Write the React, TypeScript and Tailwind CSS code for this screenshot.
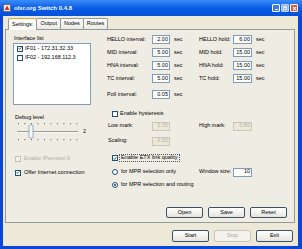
import React from "react";
import clsx from "clsx";

function Check({ checked, disabled }: { checked?: boolean; disabled?: boolean }) {
  return (
    <span
      className={clsx(
        "w-[6px] h-[6px] border flex items-center justify-center shrink-0",
        disabled ? "border-[#c4c2b4] bg-[#f2f1ea]" : "border-[#1c5180] bg-white"
      )}
    >
      {checked && (
        <svg viewBox="0 0 6 6" className="w-[5px] h-[5px]">
          <path d="M0.8 2.8 L2.3 4.4 L5.2 1.0" stroke="#2a3a2a" strokeWidth="1.2" fill="none" />
        </svg>
      )}
    </span>
  );
}

function Radio({ on }: { on?: boolean }) {
  return (
    <span className="w-[6px] h-[6px] rounded-full border border-[#1c5180] bg-white flex items-center justify-center shrink-0">
      {on && <span className="w-[2px] h-[2px] rounded-full bg-[#2a3a2a]" />}
    </span>
  );
}

function Field({ value, w, disabled }: { value: string; w: string; disabled?: boolean }) {
  return (
    <div
      className={clsx(
        "h-[9px] border flex items-center justify-end pr-[1px] shrink-0",
        w,
        disabled ? "border-[#c9c7ba] bg-[#ece9d8] text-[#b4b2a6]" : "border-[#7f9db9] bg-white"
      )}
    >
      {value}
    </div>
  );
}

function Btn({ label, disabled }: { label: string; disabled?: boolean }) {
  return (
    <div
      className={clsx(
        "w-[37px] h-full rounded-[2px] border flex items-center justify-center",
        disabled
          ? "border-[#c9c7ba] bg-[#f3f2ec] text-[#aca899]"
          : "border-[#3c5168] bg-linear-to-b from-[#ffffff] to-[#e6e4da]"
      )}
    >
      {label}
    </div>
  );
}

function TimeRow({ label, value, label2, value2 }: { label: string; value: string; label2?: string; value2?: string }) {
  return (
    <div className="flex items-center h-[13px]">
      <span className="w-[45px]">{label}</span>
      <Field value={value} w="w-[18px]" />
      <span className="ml-[4px] w-[25px]">sec</span>
      {label2 && (
        <>
          <span className="w-[34px]">{label2}</span>
          <Field value={value2 || ""} w="w-[19px]" />
          <span className="ml-[4px]">sec</span>
        </>
      )}
    </div>
  );
}

const tabs = ["Settings", "Output", "Nodes", "Routes"];

export default function App() {
  return (
    <div className="w-[302px] h-[249px] bg-[#0b47d6] flex flex-col overflow-hidden font-['Liberation_Sans',Arial,sans-serif] text-[5.5px] leading-none text-black">
      {/* title bar */}
      <div className="h-[16px] shrink-0 flex items-center px-[3px] bg-linear-to-b from-[#3b8cf7] via-[#0a5ce6] to-[#0650d8]">
        <svg viewBox="0 0 8 8" className="w-[8px] h-[8px]">
          <rect x="0.5" y="0.5" width="7" height="7" fill="#f4efe6" stroke="#7a3b2e" strokeWidth="0.6" />
          <path d="M1.5 6 L4 1.5 L6.5 6 Z" fill="#c8341f" />
        </svg>
        <span className="ml-[3px] text-white font-bold text-[6px]">olsr.org Switch 0.4.8</span>
        <div className="ml-auto flex gap-[1px] mr-[1px]">
          <div className="w-[8px] h-[8px] rounded-[1px] border border-white bg-[#3a7cf0] flex items-end justify-center pb-[1px]">
            <span className="w-[3px] h-[1px] bg-white" />
          </div>
          <div className="w-[8px] h-[8px] rounded-[1px] border border-[#c8d8f8] bg-[#8eb0ee] flex items-center justify-center">
            <span className="w-[4px] h-[4px] border border-[#dfe8fa] border-t-2" />
          </div>
          <div className="w-[8px] h-[8px] rounded-[1px] border border-white bg-[#e0532c] flex items-center justify-center">
            <svg viewBox="0 0 6 6" className="w-[5px] h-[5px]">
              <path d="M1 1 L5 5 M5 1 L1 5" stroke="white" strokeWidth="1.3" />
            </svg>
          </div>
        </div>
      </div>

      {/* client area */}
      <div className="flex-1 ml-[3px] mr-[4px] mb-[3px] bg-[#ece9d8] flex flex-col">
        <div className="h-[13px] pt-[2px] pl-[5px] flex items-end shrink-0">
          {tabs.map((t, i) => (
            <div
              key={t}
              className={clsx(
                "h-[11px] px-[3px] flex items-center border border-b-0 border-[#919b9c] rounded-t-[2px]",
                i === 0 ? "bg-[#fbfbf8] border-t-[#e8a33c] -mb-px z-10 h-[12px]" : "bg-linear-to-b from-[#ffffff] to-[#ebe9e0] -ml-px"
              )}
            >
              {i === 0 ? "Settings:" : t}
            </div>
          ))}
        </div>

        <div className="ml-[2px] mr-[3px] h-[194px] shrink-0 border border-[#919b9c] bg-[#efede3] flex">
          {/* left column */}
          <div className="w-[78px] ml-[7px] pt-[5px] flex flex-col shrink-0">
            <div className="h-[7px] pl-[1px] flex items-center">Interface list</div>
            <div className="mt-[1px] h-[62px] border border-[#7f9db9] bg-white pt-[0px]">
              <div className="h-[9px] flex items-center pl-[3px] gap-[2px]">
                <Check checked />
                <span>IF01 - 172.31.32.33</span>
              </div>
              <div className="h-[9px] flex items-center pl-[3px] gap-[2px]">
                <Check />
                <span>IF02 - 192.168.112.3</span>
              </div>
            </div>
            <div className="mt-[9px] h-[7px] pl-[2px] flex items-center">Debug level</div>
            <div className="h-[21px] flex items-center">
              <svg viewBox="0 0 64 21" className="w-[64px] h-[21px] ml-[2px]">
                {Array.from({ length: 10 }).map((_, i) => (
                  <g key={i}>
                    <rect x={3 + i * 6.5} y={2} width={0.8} height={1.2} fill="#4a4a4a" />
                    <rect x={3 + i * 6.5} y={18} width={0.8} height={1.2} fill="#4a4a4a" />
                  </g>
                ))}
                <rect x={2} y={10} width={61} height={1.2} fill="#9d9b8e" />
                <rect x={2} y={11.2} width={61} height={0.8} fill="#ffffff" />
                <rect x={14} y={4} width={4} height={13} rx={0.8} fill="#f6f6f2" stroke="#6f8fb8" strokeWidth={0.7} />
              </svg>
              <span className="ml-[4px]">2</span>
            </div>
            <div className="mt-[13px] h-[7px] pl-[2px] flex items-center gap-[3px] text-[#b1afa3]">
              <Check disabled />
              <span>Enable IPversion 6</span>
            </div>
            <div className="mt-[7px] h-[7px] pl-[2px] flex items-center gap-[3px]">
              <Check checked />
              <span>Offer Internet connection</span>
            </div>
          </div>

          {/* right column */}
          <div className="ml-[16px] flex-1 pt-[3px] flex flex-col">
            <TimeRow label="HELLO interval:" value="2.00" label2="HELLO hold:" value2="6.00" />
            <TimeRow label="MID interval:" value="5.00" label2="MID hold:" value2="15.00" />
            <TimeRow label="HNA interval:" value="5.00" label2="HNA hold:" value2="15.00" />
            <TimeRow label="TC interval:" value="5.00" label2="TC hold:" value2="15.00" />
            <div className="mt-[3px]">
              <TimeRow label="Poll interval:" value="0.05" />
            </div>

            <div className="mt-[7px] h-[12px] pl-[5px] flex items-center gap-[2px]">
              <Check />
              <span>Enable hysteresis</span>
            </div>
            <div className="h-[12px] flex items-center">
              <span className="w-[45px] pl-[1px]">Low mark:</span>
              <Field value="0.30" w="w-[18px]" disabled />
              <span className="w-[29px]" />
              <span className="w-[34px]">High mark:</span>
              <Field value="0.80" w="w-[19px]" disabled />
            </div>
            <div className="mt-[3px] h-[12px] flex items-center">
              <span className="w-[45px] pl-[1px]">Scaling:</span>
              <Field value="0.50" w="w-[18px]" disabled />
            </div>

            <div className="mt-[5px] h-[12px] pl-[5px] flex items-center gap-[2px]">
              <Check checked />
              <span className="outline outline-dotted outline-[0.5px] outline-[#555] px-[1px]">Enable ETX link quality</span>
            </div>
            <div className="mt-[2px] h-[12px] flex items-center">
              <div className="w-[92px] pl-[5px] flex items-center gap-[3px]">
                <Radio />
                <span>for MPR selection only</span>
              </div>
              <span className="w-[34px]">Window size:</span>
              <Field value="10" w="w-[19px]" />
            </div>
            <div className="mt-[1px] h-[12px] pl-[5px] flex items-center gap-[3px]">
              <Radio on />
              <span>for MPR selection and routing</span>
            </div>

            <div className="mt-[16px] h-[11px] flex justify-end gap-[5px] pr-[7px]">
              <Btn label="Open" />
              <Btn label="Save" />
              <Btn label="Reset" />
            </div>
          </div>
        </div>

        <div className="mt-[7px] h-[12px] shrink-0 flex justify-end gap-[5px] pr-[5px]">
          <Btn label="Start" />
          <Btn label="Stop" disabled />
          <Btn label="Exit" />
        </div>
      </div>
    </div>
  );
}
